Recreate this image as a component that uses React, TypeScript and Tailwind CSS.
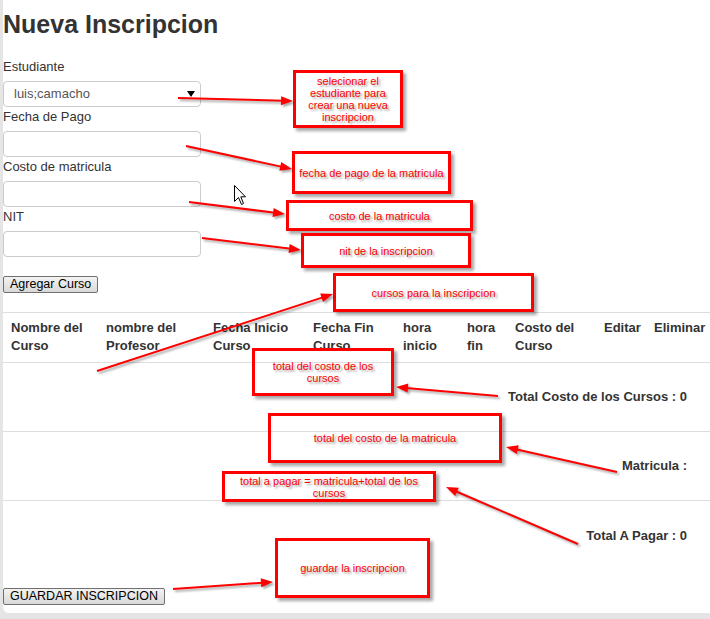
import React from 'react';

const font = { fontFamily: '"Liberation Sans", Arial, sans-serif' };

interface Note {
  box: string;
  lines: string[];
}

const notes: Note[] = [
  { box: 'left-[293px] top-[70px] w-[110px] h-[58px]', lines: ['selecionar el', 'estudiante para', 'crear una nueva', 'inscripcion'] },
  { box: 'left-[292px] top-[151px] w-[159px] h-[43px]', lines: ['fecha de pago de la matricula'] },
  { box: 'left-[286px] top-[200px] w-[187px] h-[31px]', lines: ['costo de la matricula'] },
  { box: 'left-[301px] top-[233px] w-[170px] h-[35px]', lines: ['nit de la inscripcion'] },
  { box: 'left-[333px] top-[273px] w-[201px] h-[39px]', lines: ['cursos para la inscripcion'] },
  { box: 'left-[252px] top-[348px] w-[142px] h-[48px]', lines: ['total del costo de los', 'cursos'] },
  { box: 'left-[268px] top-[413px] w-[234px] h-[50px]', lines: ['total del costo de la matricula'] },
  { box: 'left-[222px] top-[471px] w-[214px] h-[31px]', lines: ['total a pagar = matricula+total de los', 'cursos'] },
  { box: 'left-[275px] top-[538px] w-[155px] h-[60px]', lines: ['guardar la inscripcion'] },
];

// [x1, y1, x2 (tip), y2 (tip)]
const arrows: [number, number, number, number][] = [
  [178, 98, 293, 101],
  [186, 146, 292, 169],
  [189, 202, 285, 214],
  [202, 238, 301, 250],
  [97, 371, 333, 294],
  [498, 396, 396, 387],
  [617, 472, 506, 447],
  [578, 544, 446, 487],
  [173, 589, 273, 582],
];

function Arrow({ a }: { a: [number, number, number, number] }) {
  const [x1, y1, x2, y2] = a;
  const dx = x2 - x1;
  const dy = y2 - y1;
  const len = Math.sqrt(dx * dx + dy * dy);
  const ux = dx / len;
  const uy = dy / len;
  const hl = 12;
  const hw = 4.5;
  const bx = x2 - ux * hl;
  const by = y2 - uy * hl;
  const pts = `${x2},${y2} ${bx - uy * hw},${by + ux * hw} ${bx + uy * hw},${by - ux * hw}`;
  return (
    <g>
      <line x1={x1} y1={y1} x2={bx + ux * 2} y2={by + uy * 2} stroke="#ff0000" strokeWidth={2} />
      <polygon points={pts} fill="#ff0000" />
    </g>
  );
}

const columns = [
  { w: 'w-[95px]', label: 'Nombre del Curso' },
  { w: 'w-[107px]', label: 'nombre del Profesor' },
  { w: 'w-[100px]', label: 'Fecha Inicio Curso' },
  { w: 'w-[90px]', label: 'Fecha Fin Curso' },
  { w: 'w-[64px]', label: 'hora inicio' },
  { w: 'w-[48px]', label: 'hora fin' },
  { w: 'w-[89px]', label: 'Costo del Curso' },
  { w: 'w-[50px]', label: 'Editar' },
  { w: 'w-[69px]', label: 'Eliminar' },
];

function Field({ label }: { label: string }) {
  return (
    <div>
      <div className="text-[13px] leading-[20px] text-[#333]">{label}</div>
      <input className="mt-[4px] block w-[198px] h-[26px] border border-[#ccc] rounded-[4px] bg-white outline-none" />
    </div>
  );
}

export default function App() {
  return (
    <div className="relative w-[710px] h-[619px] overflow-hidden bg-[#e5e5e5]" style={font}>
      <div className="ml-[3px] w-[712px] bg-white rounded-bl-[6px] pb-[8px]">
        <h1 className="pt-[10px] text-[25px] leading-[28px] font-bold text-[#333]">Nueva Inscripcion</h1>

        <div className="mt-[19px]">
          <div className="text-[13px] leading-[20px] text-[#333]">Estudiante</div>
          <div className="mt-[4px] flex items-center justify-between w-[198px] h-[26px] border border-[#ccc] rounded-[4px] pl-[10px] pr-[5px]">
            <span className="text-[13px] text-[#555]">luis;camacho</span>
            <svg width="8" height="6" viewBox="0 0 8 6">
              <polygon points="0,0 8,0 4,6" fill="#000" />
            </svg>
          </div>
        </div>
        <Field label="Fecha de Pago" />
        <Field label="Costo de matricula" />
        <Field label="NIT" />

        <button className="mt-[19px] block h-[17px] px-[6px] text-[12.5px] leading-[15px] text-black border border-[#707070] rounded-[2px] bg-gradient-to-b from-[#f3f3f3] to-[#d9d9d9]">
          Agregar Curso
        </button>

        <div className="mt-[19px] border-t border-b border-[#ddd] flex pt-[6px] pb-[7px]">
          {columns.map((c) => (
            <div key={c.label} className={`${c.w} shrink-0 px-2 text-[13px] leading-[18px] font-bold text-[#333]`}>
              {c.label}
            </div>
          ))}
        </div>
        <div className="h-[69px] border-b border-[#ddd] flex items-center justify-end pr-[28px]">
          <span className="text-[13px] font-bold text-[#333]">Total Costo de los Cursos : 0</span>
        </div>
        <div className="h-[69px] border-b border-[#ddd] flex items-center justify-end pr-[28px]">
          <span className="text-[13px] font-bold text-[#333]">Matricula :</span>
        </div>
        <div className="h-[69px] flex items-center justify-end pr-[28px]">
          <span className="text-[13px] font-bold text-[#333]">Total A Pagar : 0</span>
        </div>

        <button className="mt-[18px] block h-[17px] px-[6px] text-[12.5px] leading-[15px] text-black border border-[#707070] rounded-[2px] bg-gradient-to-b from-[#f3f3f3] to-[#d9d9d9]">
          GUARDAR INSCRIPCION
        </button>
      </div>

      {notes.map((n) => (
        <div
          key={n.lines.join(' ')}
          className={`absolute ${n.box} border-[3px] border-[#ff0000] shadow-[3px_3px_3px_rgba(0,0,0,0.35)] flex items-center justify-center`}
        >
          <div className="text-center text-[11px] leading-[12px] text-[#ff0000] [text-shadow:2px_2px_2px_rgba(0,0,0,0.35)]">
            {n.lines.map((l, i) => (
              <div key={i}>{l}</div>
            ))}
          </div>
        </div>
      ))}

      <svg
        className="absolute left-0 top-0 pointer-events-none drop-shadow-[2px_2px_1px_rgba(0,0,0,0.35)]"
        width="710"
        height="619"
        viewBox="0 0 710 619"
      >
        {arrows.map((a, i) => (
          <Arrow key={i} a={a} />
        ))}
      </svg>

      <svg className="absolute left-[234px] top-[185px] pointer-events-none" width="13" height="21" viewBox="0 0 13 21">
        <path d="M0.5 0.5 L0.5 16.5 L4.5 12.5 L7.5 19.5 L9.5 18.5 L6.8 11.8 L11.5 11.8 Z" fill="#fff" stroke="#000" strokeWidth="1" />
      </svg>
    </div>
  );
}
